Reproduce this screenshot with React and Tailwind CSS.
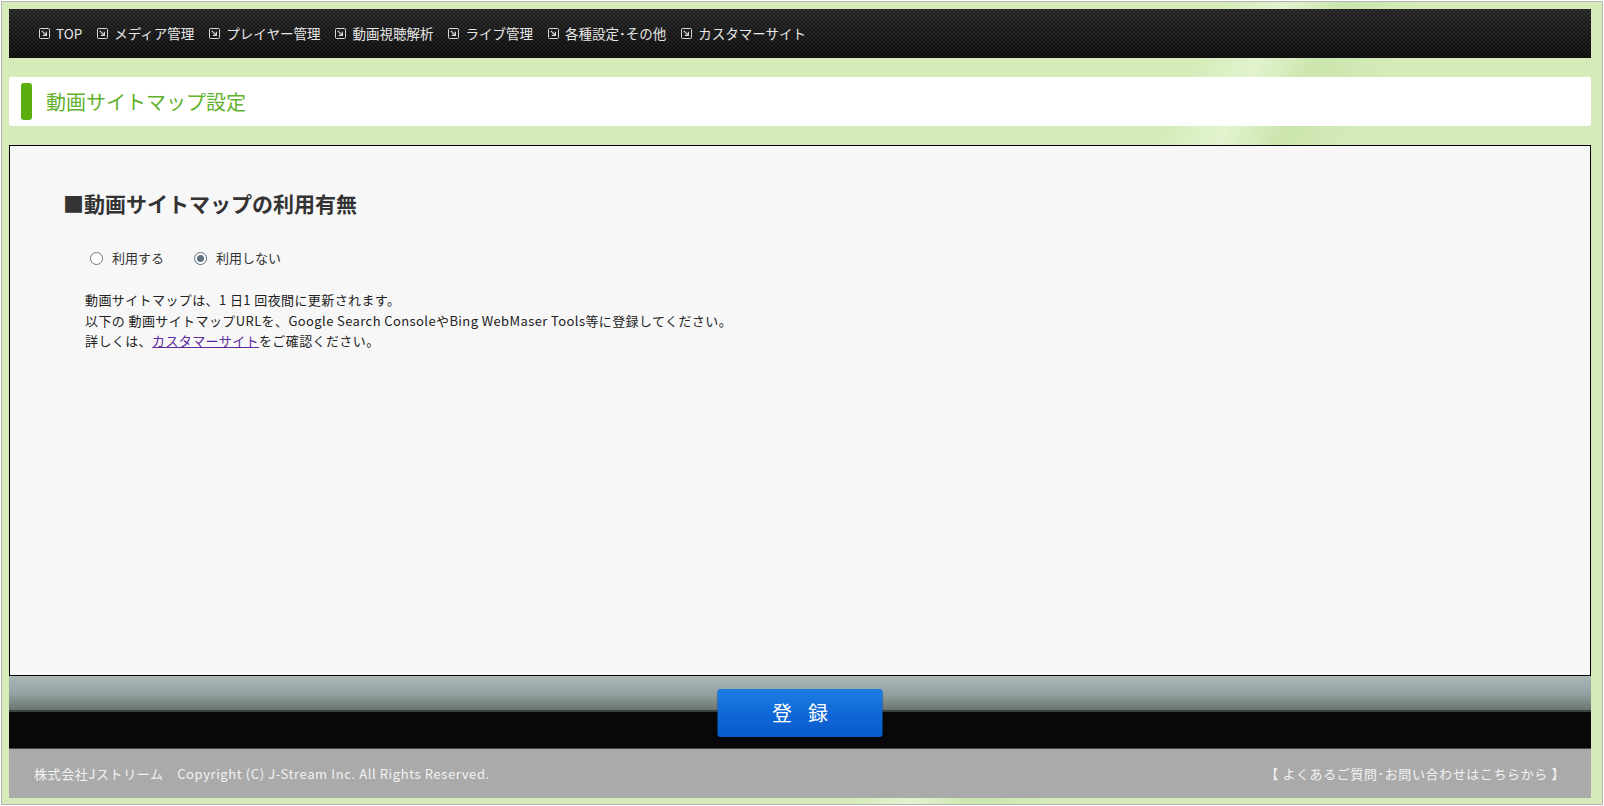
const navItems = [
  "TOP",
  "メディア管理",
  "プレイヤー管理",
  "動画視聴解析",
  "ライブ管理",
  "各種設定･その他",
  "カスタマーサイト",
];

function NavIcon() {
  return (
    <svg width="11" height="11" viewBox="0 0 11 11" className="shrink-0">
      <rect x="0.5" y="0.5" width="10" height="10" rx="1" fill="none" stroke="#d8d8d8" strokeWidth="1" />
      <path d="M2.8 2.8 L7.2 7.2 M3.8 7.4 H7.4 V3.8" fill="none" stroke="#d8d8d8" strokeWidth="1.2" />
    </svg>
  );
}

function Radio({ checked, label }) {
  return (
    <label className="flex items-center gap-[9px]">
      <span
        className={
          checked
            ? "w-[13px] h-[13px] rounded-full border border-[#5b6b78] bg-white flex items-center justify-center"
            : "w-[13px] h-[13px] rounded-full border border-[#767676] bg-white"
        }
      >
        {checked && <span className="w-[7px] h-[7px] rounded-full bg-[#5f7282]" />}
      </span>
      <span>{label}</span>
    </label>
  );
}

export default function App() {
  return (
    <div className="h-[806px] w-full bg-white p-px font-['Noto_Sans_CJK_JP','Noto_Sans',sans-serif]">
      <div className="h-full border border-[#b4b4b4] pl-[7px] pr-[11px] pt-[7px] flex flex-col bg-[linear-gradient(115deg,#d5ecba_0%,#d5ecba_62%,#e2f3cf_65%,#cbe5ad_68%,#d5ecba_72%,#d5ecba_100%)]">
        <nav className="h-[49px] flex items-center pl-[30px] gap-[15px] text-[13.5px] text-[#e6e6e6] [background-image:linear-gradient(to_bottom,rgba(0,0,0,0)_0%,rgba(0,0,0,0.55)_100%),repeating-conic-gradient(#353535_0_25%,#1c1c1c_0_50%)] [background-size:100%_100%,4px_4px]">
          {navItems.map((item) => (
            <span key={item} className="flex items-center gap-[6px] leading-none">
              <NavIcon />
              <span>{item}</span>
            </span>
          ))}
        </nav>

        <div className="mt-[19px] h-[49px] bg-white rounded-[2px] flex items-center pl-[12px]">
          <div className="w-[11px] h-[37px] rounded-[3px] bg-[#5aae0e]" />
          <h1 className="ml-[14px] text-[20px] text-[#62b12a] leading-none">動画サイトマップ設定</h1>
        </div>

        <main className="mt-[19px] h-[531px] border border-black bg-[#f7f7f7] pl-[53px] pt-[42px] text-[#333]">
          <h2 className="text-[21px] font-bold leading-[30px] text-[#333]">■動画サイトマップの利用有無</h2>
          <div className="mt-[30px] ml-[27px] flex items-center gap-[30px] text-[13px] leading-[20px]">
            <Radio label="利用する" />
            <Radio checked label="利用しない" />
          </div>
          <div className="mt-[22px] ml-[22px] text-[13px] tracking-[0.4px] leading-[20.5px] text-[#222]">
            <p>動画サイトマップは、1 日1 回夜間に更新されます。</p>
            <p>以下の 動画サイトマップURLを、Google Search ConsoleやBing WebMaser Tools等に登録してください。</p>
            <p>
              詳しくは、
              <a href="#" className="text-[#5b2a9e] underline">カスタマーサイト</a>
              をご確認ください。
            </p>
          </div>
        </main>

        <div className="relative">
          <div className="h-[36px] bg-[linear-gradient(to_bottom,#aab7b7_0%,#96a3a2_50%,#6a7571_100%)] border-b-2 border-[#3c403e]" />
          <div className="h-[37px] bg-[#080808] border-b border-[#4a4a4a]" />
          <button className="absolute left-1/2 -translate-x-1/2 top-[13px] w-[165px] h-[48px] rounded-[3px] bg-[linear-gradient(to_bottom,#1e7de3_0%,#0e66d6_55%,#085bca_100%)] text-white text-[20px] flex items-center justify-center gap-[16px] shadow-[0_1px_1px_rgba(0,0,0,0.4)]">
            <span>登</span>
            <span>録</span>
          </button>
        </div>
        <footer className="h-[49px] bg-[#aaaaaa] flex items-center justify-between pl-[25px] pr-[26px] text-[13px] tracking-[0.6px] text-[#f2f2f2]">
          <span>株式会社Jストリーム　Copyright (C) J-Stream Inc. All Rights Reserved.</span>
          <span>【 よくあるご質問･お問い合わせはこちらから 】</span>
        </footer>
      </div>
    </div>
  );
}
